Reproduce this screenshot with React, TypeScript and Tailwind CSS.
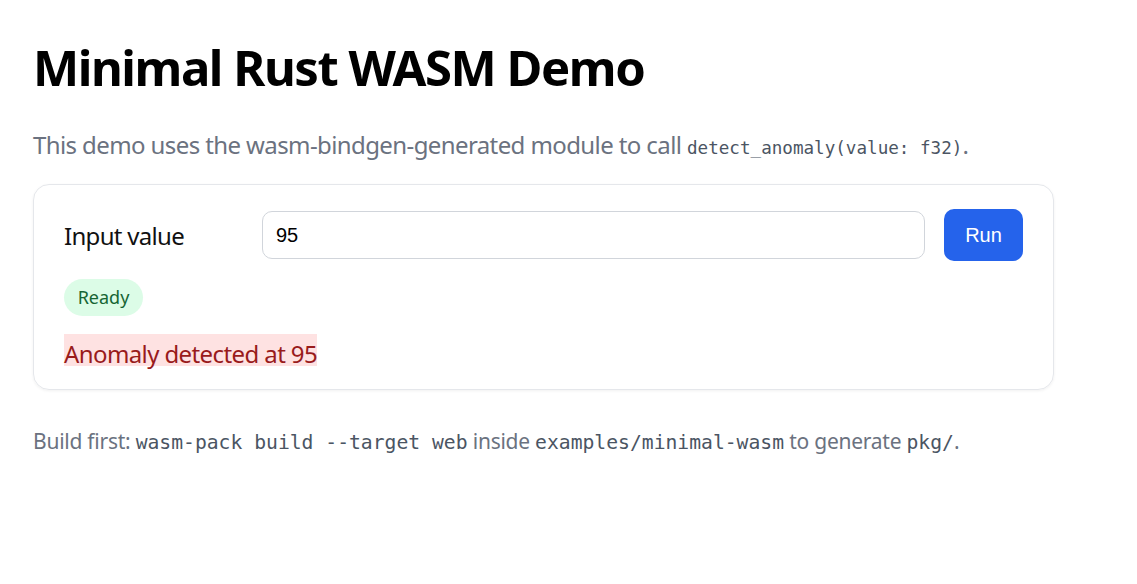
import React from "react";

export default function App() {
  return (
    <div className="min-h-[584px] bg-white text-black font-['Noto_Sans','Open_Sans',sans-serif]">
      <div className="w-[1021px] ml-[33px] pt-[38px]">
        <h1 className="text-[49px] font-bold leading-[58px] tracking-[-1.45px]">Minimal Rust WASM Demo</h1>
        <p className="mt-[31px] text-[24px] text-[#6b7280] leading-[36px] tracking-[-0.6px]">
          This demo uses the wasm-bindgen-generated module to call{" "}
          <code className="font-['DejaVu_Sans_Mono',monospace] text-[17.6px] leading-none tracking-normal text-[#4b5563]">detect_anomaly(value: f32)</code>.
        </p>
        <div className="mt-[21px] rounded-[16px] border border-[#e5e7eb] shadow-[0_1px_3px_rgba(0,0,0,0.06)] px-[30px] pt-[24px] pb-[23px]">
          <div className="flex items-center">
            <label className="w-[198px] mt-[2px] text-[24px] leading-[32px] tracking-[-0.7px] text-[#111]">Input value</label>
            <input
              defaultValue="95"
              className="flex-1 h-[48px] rounded-[10px] border border-[#d1d5db] px-[13px] text-[20px] font-['Liberation_Sans',Arial,sans-serif] text-black outline-none"
            />
            <button className="ml-[19px] w-[79px] h-[52px] rounded-[10px] bg-[#2563eb] text-white text-[20px] font-['Liberation_Sans',Arial,sans-serif]">
              Run
            </button>
          </div>
          <div className="mt-[18px] flex">
            <span className="w-[79px] h-[37px] text-center rounded-full bg-[#dcfce7] text-[#166534] text-[18px] leading-[37px]">Ready</span>
          </div>
          <div className="mt-[18px] flex">
            <span className="h-[32px] pt-[8px] bg-[#fee2e2] text-[#991b1b] text-[24px] leading-[24px] tracking-[-0.6px]">Anomaly detected at 95</span>
          </div>
        </div>
        <p className="mt-[36px] text-[21px] leading-[30px] tracking-[-0.25px] text-[#6b7280]">
          Build first:{" "}
          <code className="font-['DejaVu_Sans_Mono',monospace] text-[19.7px] leading-none tracking-normal text-[#4b5563]">wasm-pack build --target web</code>{" "}
          inside{" "}
          <code className="font-['DejaVu_Sans_Mono',monospace] text-[19.7px] leading-none tracking-normal text-[#4b5563]">examples/minimal-wasm</code>{" "}
          to generate{" "}
          <code className="font-['DejaVu_Sans_Mono',monospace] text-[19.7px] leading-none tracking-normal text-[#4b5563]">pkg/</code>.
        </p>
      </div>
    </div>
  );
}
